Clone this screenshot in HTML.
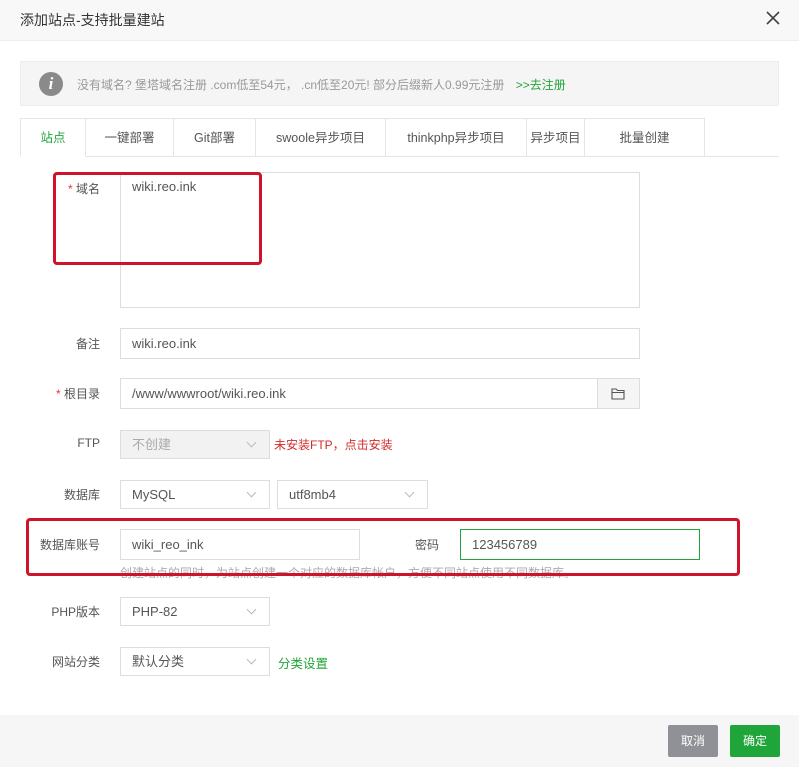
<!DOCTYPE html>
<html><head><meta charset="utf-8"><style>
*{box-sizing:border-box;margin:0;padding:0}
body{width:799px;height:767px;background:#fff;position:relative;overflow:hidden;font-family:"Liberation Sans","Noto Sans CJK SC",sans-serif;font-size:13px;color:#555}
.a{position:absolute}
.lbl{position:absolute;width:100px;text-align:right;color:#555;font-size:12px}
.inp{position:absolute;border:1px solid #ddd;background:#fff;padding-left:11px;color:#555;font-size:13px;line-height:29px;height:31px}
.sel{position:absolute;border:1px solid #ddd;background:#fff;padding-left:11px;color:#555;height:29px;line-height:27px;font-size:13px}
.sel i{position:absolute;right:14px;top:8px;width:7px;height:7px;border-right:1px solid #bbb;border-bottom:1px solid #bbb;transform:rotate(45deg)}
.tab{position:absolute;top:118px;height:39px;line-height:38px;text-align:center;border:1px solid #e6e6e6;border-left:none;color:#555;background:#fff;font-size:12.5px}
.red{position:absolute;border:3px solid #d0122a;border-radius:4px}
</style></head><body>
<div class="a" style="left:0;top:0;width:799px;height:41px;background:#f8f8f8;border-bottom:1px solid #eee"></div>
<div class="a" style="left:20px;top:10px;font-size:14px;color:#333">添加站点-支持批量建站</div>
<svg class="a" style="left:766px;top:11px" width="14" height="14"><path d="M1 1L13 13M13 1L1 13" stroke="#444" stroke-width="1.6"/></svg>
<div class="a" style="left:20px;top:61px;width:759px;height:45px;background:#f5f5f5;border:1px solid #eee"></div>
<div class="a" style="left:39px;top:72px;width:24px;height:24px;border-radius:50%;background:#8a8a8a;color:#fff;text-align:center;font:italic bold 17px/24px 'Liberation Serif',serif">i</div>
<div class="a" style="left:77px;top:76px;color:#999;font-size:12px">没有域名? 堡塔域名注册 .com低至54元， .cn低至20元! 部分后缀新人0.99元注册 <span style="color:#20a53a;margin-left:8px">&gt;&gt;去注册</span></div>
<div class="a" style="left:20px;top:156px;width:759px;height:1px;background:#e6e6e6"></div>
<div class="tab" style="left:20px;width:66px;border-left:1px solid #e6e6e6;border-bottom-color:#fff;color:#20a53a">站点</div>
<div class="tab" style="left:86px;width:88px">一键部署</div>
<div class="tab" style="left:174px;width:82px">Git部署</div>
<div class="tab" style="left:256px;width:130px">swoole异步项目</div>
<div class="tab" style="left:386px;width:141px">thinkphp异步项目</div>
<div class="tab" style="left:527px;width:58px">异步项目</div>
<div class="tab" style="left:585px;width:120px">批量创建</div>

<div class="lbl" style="top:180px"><span style="color:#e33">* </span>域名</div>
<div class="a" style="left:120px;top:172px;width:520px;height:136px;border:1px solid #ddd;padding:6px 11px;color:#555">wiki.reo.ink</div>
<div class="lbl" style="top:335px">备注</div>
<div class="inp" style="left:120px;top:328px;width:520px">wiki.reo.ink</div>
<div class="lbl" style="top:385px"><span style="color:#e33">* </span>根目录</div>
<div class="inp" style="left:120px;top:378px;width:520px">/www/wwwroot/wiki.reo.ink</div>
<div class="a" style="left:597px;top:378px;width:43px;height:31px;border:1px solid #ddd;background:#f5f5f5"></div>
<svg class="a" style="left:611px;top:387px" width="15" height="13"><path d="M1 2h4l1.5 1.5H13v8.5H1zM1 5.5h12" fill="none" stroke="#555" stroke-width="1.1"/></svg>
<div class="lbl" style="top:436px">FTP</div>
<div class="sel" style="left:120px;top:430px;width:150px;background:#f2f2f2;color:#aaa">不创建<i></i></div>
<div class="a" style="left:274px;top:436px;color:#d02c2c;font-size:12px">未安装FTP，点击安装</div>
<div class="lbl" style="top:486px">数据库</div>
<div class="sel" style="left:120px;top:480px;width:150px">MySQL<i></i></div>
<div class="sel" style="left:277px;top:480px;width:151px">utf8mb4<i></i></div>
<div class="lbl" style="top:536px">数据库账号</div>
<div class="inp" style="left:120px;top:529px;width:240px">wiki_reo_ink</div>
<div class="a" style="left:415px;top:536px;font-size:12px">密码</div>
<div class="inp" style="left:460px;top:529px;width:240px;border-color:#20a53a">123456789</div>
<div class="a" style="left:120px;top:564px;color:#aaa;font-size:12px">创建站点的同时，为站点创建一个对应的数据库帐户，方便不同站点使用不同数据库。</div>
<div class="lbl" style="top:603px">PHP版本</div>
<div class="sel" style="left:120px;top:597px;width:150px">PHP-82<i></i></div>
<div class="lbl" style="top:653px">网站分类</div>
<div class="sel" style="left:120px;top:647px;width:150px">默认分类<i></i></div>
<div class="a" style="left:278px;top:653px;color:#20a53a;font-size:12.5px">分类设置</div>

<div class="red" style="left:53px;top:172px;width:209px;height:93px"></div>
<div class="red" style="left:26px;top:518px;width:714px;height:58px"></div>

<div class="a" style="left:0;top:715px;width:799px;height:52px;background:#f6f6f6"></div>
<div class="a" style="left:668px;top:725px;width:50px;height:32px;background:#8f9196;color:#fff;border-radius:2px;text-align:center;line-height:32px;font-size:12px">取消</div>
<div class="a" style="left:730px;top:725px;width:50px;height:32px;background:#20a53a;color:#fff;border-radius:2px;text-align:center;line-height:32px;font-size:12px">确定</div>
</body></html>
